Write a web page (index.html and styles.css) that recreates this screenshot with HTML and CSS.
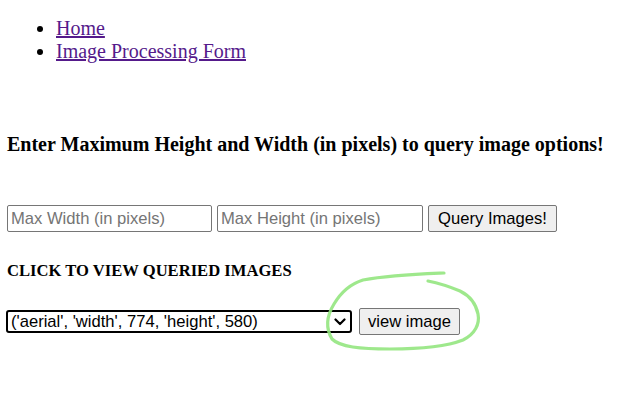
FILE: index.html
```html
<!DOCTYPE html>
<html>
<head>
<meta charset="utf-8">
<link rel="stylesheet" href="styles.css">
</head>
<body>
<ul class="nav">
  <li><a href="#">Home</a></li>
  <li><a href="#">Image Processing Form</a></li>
</ul>
<h4 class="title">Enter Maximum Height and Width (in pixels) to query image options!</h4>
<form class="query-row">
  <input class="field" type="text" placeholder="Max Width (in pixels)">
  <input class="field" type="text" placeholder="Max Height (in pixels)">
  <button class="btn btn-query" type="button">Query Images!</button>
</form>
<h5 class="subtitle">CLICK TO VIEW QUERIED IMAGES</h5>
<div class="view-row">
  <div class="select-wrap">
    <select class="picker">
      <option>('aerial', 'width', 774, 'height', 580)</option>
    </select>
    <svg class="chevron" width="12" height="8" viewBox="0 0 12 8">
      <path d="M1.5 1.5 L6 6 L10.5 1.5" fill="none" stroke="#000" stroke-width="2.2" stroke-linecap="round" stroke-linejoin="round"/>
    </svg>
  </div>
  <div class="btn-wrap">
    <button class="btn btn-view" type="button">view image</button>
    <svg class="scribble" width="170" height="90" viewBox="0 0 170 90">
      <path d="M124 4 C 100 5, 70 6, 43 11 C 30 15, 20 25, 14 35 C 6 48, 6 60, 12 70 C 20 78, 40 80, 70 80 C 100 80, 125 78, 143 71 C 155 65, 160 55, 158 45 C 156 35, 150 27, 140 22 C 128 17, 118 14, 108 12" fill="none" stroke="#93e67f" stroke-width="3.2" stroke-linecap="round" stroke-linejoin="round" opacity="0.9"/>
    </svg>
  </div>
</div>
</body>
</html>
```

FILE: styles.css
```css
html, body {
  background: #ffffff;
}
body {
  margin: 0;
  padding: 0 7px 70px 7px;
  font-family: "Liberation Serif", "Times New Roman", serif;
  font-size: 20px;
  color: #000;
}
.nav {
  margin: 17px 0 0 0;
  padding-left: 49px;
  line-height: 23px;
}
.nav a {
  color: #551a8b;
  text-decoration: underline;
}
.title {
  font-size: 20px;
  font-weight: bold;
  margin: 70px 0 0 0;
  line-height: 23px;
}
.query-row {
  display: flex;
  gap: 5px;
  margin: 49px 0 0 0;
}
.field {
  box-sizing: border-box;
  width: 205px;
  height: 27px;
  border: 1px solid #767676;
  border-radius: 2px;
  padding: 1px 3px;
  font-family: "Liberation Sans", Arial, sans-serif;
  font-size: 16.6px;
  color: #000;
  background: #fff;
}
.field + .field {
  width: 206px;
}
.field::placeholder {
  color: #757575;
}
.btn {
  box-sizing: border-box;
  height: 27px;
  border: 1px solid #767676;
  border-radius: 2px;
  background: #efefef;
  font-family: "Liberation Sans", Arial, sans-serif;
  font-size: 16.6px;
  color: #000;
  padding: 0 8px;
}
.btn-query {
  width: 129px;
}
.subtitle {
  font-size: 16.6px;
  font-weight: bold;
  margin: 29px 0 0 0;
  line-height: 19px;
}
.view-row {
  display: flex;
  align-items: center;
  gap: 7px;
  margin: 28px 0 0 -1px;
}
.select-wrap {
  position: relative;
  display: flex;
}
.picker {
  box-sizing: border-box;
  width: 346px;
  height: 23px;
  border: 2px solid #000;
  border-radius: 3px;
  font-family: "Liberation Sans", Arial, sans-serif;
  font-size: 16.6px;
  color: #000;
  background: #fff;
  padding: 0 3px;
  appearance: none;
  -webkit-appearance: none;
}
.chevron {
  position: absolute;
  right: 6px;
  top: 8px;
  pointer-events: none;
}
.btn-wrap {
  position: relative;
}
.btn-view {
  width: 101px;
}
.scribble {
  position: absolute;
  left: -39px;
  top: -39px;
  pointer-events: none;
  overflow: visible;
}
```
